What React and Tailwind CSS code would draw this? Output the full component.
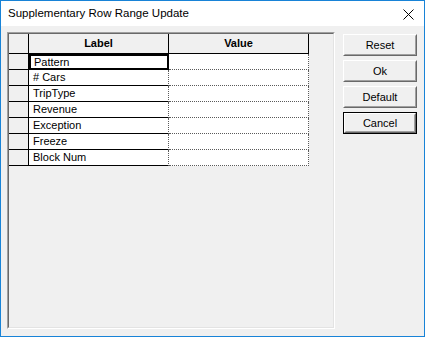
import React from "react";

const rows = ["Pattern", "# Cars", "TripType", "Revenue", "Exception", "Freeze", "Block Num"];
const buttons = ["Reset", "Ok", "Default", "Cancel"];

function Button({ label, isDefault }) {
  return (
    <div className={isDefault ? "border border-black" : ""}>
      <div className="border border-t-white border-l-white border-b-[#696969] border-r-[#696969]">
        <div
          className={
            "flex items-center justify-center border border-t-[#f0f0f0] border-l-[#f0f0f0] border-b-[#a0a0a0] border-r-[#a0a0a0] bg-[#f0f0f0] text-[11px] text-black " +
            (isDefault ? "h-[18px]" : "h-[20px]")
          }
        >
          {label}
        </div>
      </div>
    </div>
  );
}

export default function App() {
  return (
    <div
      className="w-[425px] h-[337px] border border-[#1883d7] flex flex-col bg-[#f0f0f0] overflow-hidden"
      style={{ fontFamily: '"Liberation Sans", Arial, sans-serif' }}
    >
      {/* title bar */}
      <div className="h-[25px] bg-white flex items-center justify-between pl-[7px] pr-[10px]">
        <span className="text-[11.5px] text-black pt-[1px]">Supplementary Row Range Update</span>
        <svg width="11" height="11" viewBox="0 0 11 11" className="mt-[1px]">
          <path d="M0.5 0.5 L10.5 10.5 M10.5 0.5 L0.5 10.5" stroke="#000" strokeWidth="1" fill="none" />
        </svg>
      </div>

      {/* body */}
      <div className="flex-1 flex items-start pl-[6px] pt-[6px]">
        {/* sunken grid box */}
        <div className="w-[328px] h-[297px] border border-t-[#a0a0a0] border-l-[#a0a0a0] border-b-white border-r-white">
          <div className="h-full border border-t-[#696969] border-l-[#696969] border-b-[#e3e3e3] border-r-[#e3e3e3] bg-[#f0f0f0]">
            {/* header */}
            <div className="flex h-[20px] text-[11px] font-bold text-black">
              <div className="w-[20px] border-r border-b border-black"></div>
              <div className="w-[140px] border-r border-b border-black flex items-center justify-center">Label</div>
              <div className="w-[140px] border-r border-b border-black flex items-center justify-center">Value</div>
            </div>
            {rows.map((r, i) => (
              <div key={r} className="flex h-[16px] text-[11px] text-black">
                <div className="w-[20px] border-r border-b border-black bg-[#f0f0f0]"></div>
                {i === 0 ? (
                  <div className="w-[140px] border-2 border-black bg-white flex items-center pl-[3px]">{r}</div>
                ) : (
                  <div className="w-[140px] border-b border-black bg-white flex items-center pl-[4px] relative">
                    {r}
                    <div className="absolute right-0 top-0 bottom-[-1px] border-r border-dotted border-[#5a5a5a]"></div>
                  </div>
                )}
                <div className="w-[140px] border-r border-b border-dotted border-[#5a5a5a] bg-white"></div>
              </div>
            ))}
          </div>
        </div>

        {/* buttons */}
        <div className="w-[74px] ml-[8px] mt-[2px] flex flex-col gap-[4px]">
          {buttons.map((b) => (
            <Button key={b} label={b} isDefault={b === "Cancel"} />
          ))}
        </div>
      </div>
    </div>
  );
}
